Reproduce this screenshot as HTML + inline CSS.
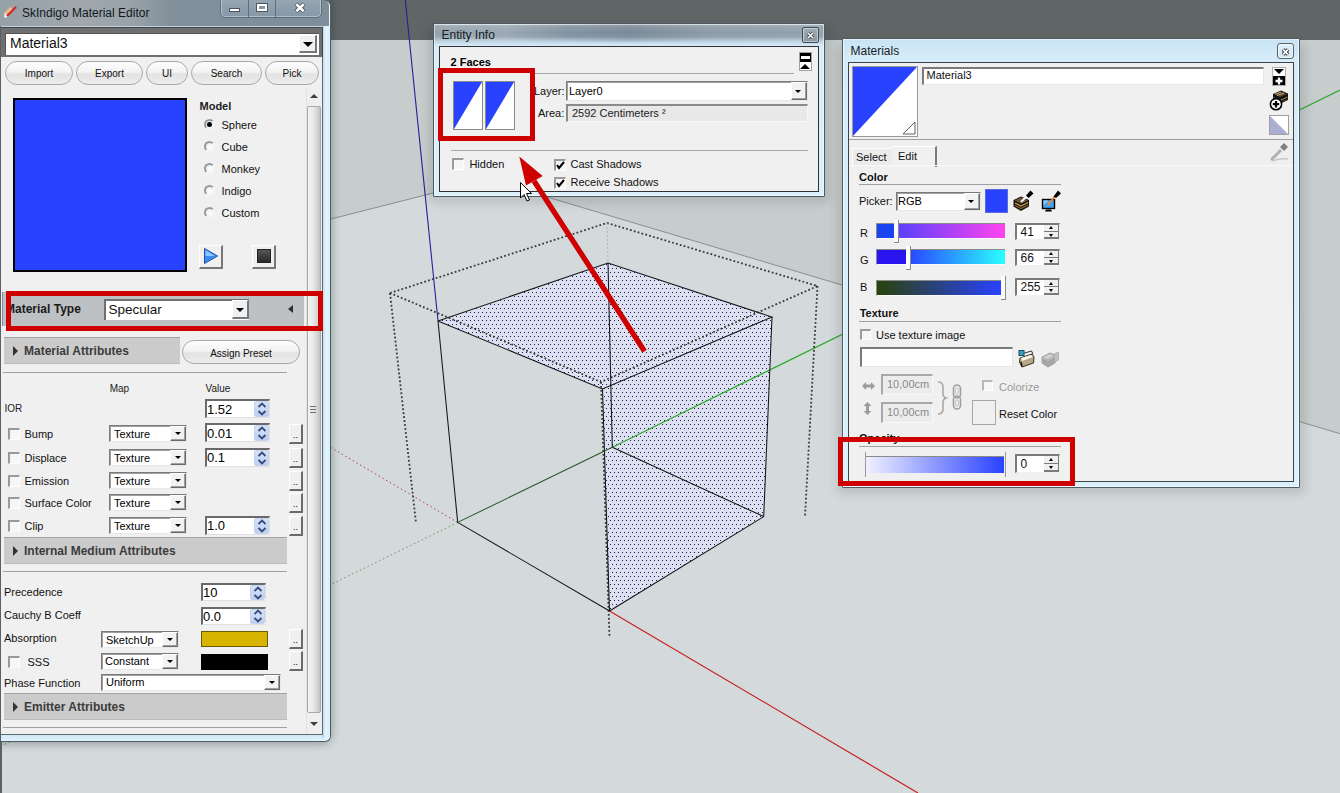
<!DOCTYPE html>
<html><head><meta charset="utf-8"><style>
*{box-sizing:border-box}
html,body{margin:0;padding:0}
body{width:1340px;height:793px;position:relative;overflow:hidden;background:#d4dadb;font-family:"Liberation Sans",sans-serif;font-size:11px;color:#000}
.a{position:absolute}
.t{position:absolute;white-space:nowrap;line-height:1}
svg{position:absolute;left:0;top:0}
</style></head><body>
<svg width="1340" height="793" viewBox="0 0 1340 793">
  <defs>
    <pattern id="stip" width="4" height="8" patternUnits="userSpaceOnUse">
      <rect width="4" height="8" fill="#dde0f0"/>
      <rect x="0" y="4" width="1" height="1" fill="#1c1c50"/>
      <rect x="2" y="0" width="1" height="1" fill="#1c1c50"/>
    </pattern>
  </defs>
  <rect x="0" y="0" width="1340" height="40" fill="#606566"/>
  <rect x="0" y="40" width="1340" height="753" fill="#d4dadb"/>
  <polygon points="329,40 1340,40 1340,433.7 487.5,179.2 329,219.5" fill="#c7cdcd"/>
  <polyline points="329,219.5 487.5,179.2 1340,433.7" fill="none" stroke="#8a9090" stroke-width="1"/>
  <line x1="457.7" y1="522.4" x2="0" y2="746.6" stroke="#50a050" stroke-width="1" stroke-dasharray="1.5,2.8"/>
  <line x1="457.7" y1="522.4" x2="329" y2="446.5" stroke="#b04040" stroke-width="1" stroke-dasharray="1.5,2.8"/>
  <polygon points="438,321 608,263 772,317 602.5,389" fill="url(#stip)"/>
  <polygon points="602.5,389 772,317 763.7,516.6 609.5,611" fill="url(#stip)"/>
  <line x1="405.3" y1="0" x2="438" y2="321" stroke="#22229c" stroke-width="1.1"/>
  <line x1="612.3" y1="447.2" x2="1340" y2="90" stroke="#30a830" stroke-width="1.2"/>
  <line x1="609.5" y1="610.9" x2="918" y2="793" stroke="#c82020" stroke-width="1.2"/>
  <g stroke="#383838" stroke-width="1.8" stroke-dasharray="1.8,2.2" fill="none">
    <polyline points="390,293 607,223 817.5,286 601,382 390,293"/>
    <line x1="390" y1="293" x2="416" y2="523"/>
    <line x1="601" y1="382" x2="609.5" y2="638"/>
    <line x1="817.5" y1="286" x2="805" y2="517"/>
  </g>
  <line x1="607" y1="223" x2="608" y2="263" stroke="#b0b4b4" stroke-width="1" stroke-dasharray="2,2"/>
  <g stroke="#141418" stroke-width="1.05" fill="none">
    <polyline points="438,321 608,263 772,317 602.5,389 438,321"/>
    <line x1="438" y1="321" x2="457.7" y2="522.4"/>
    <line x1="608" y1="263" x2="612.3" y2="447.2"/>
    <line x1="772" y1="317" x2="763.7" y2="516.6"/>
    <line x1="602.5" y1="389" x2="609.5" y2="611"/>
    <line x1="457.7" y1="522.4" x2="609.5" y2="611"/>
    <line x1="609.5" y1="611" x2="763.7" y2="516.6"/>
    <line x1="612.3" y1="447.2" x2="763.7" y2="516.6"/>
  </g>
  <line x1="457.7" y1="522.4" x2="612.3" y2="447.2" stroke="#2a5a2a" stroke-width="1.05"/>
</svg>
<div class="a" style="left:-10px;top:-10px;width:340px;height:751px;box-shadow:1px 2px 8px 1px rgba(20,30,35,.32);border-radius:8px"></div>
<div class="a" style="left:0px;top:741px;width:1.5px;height:52px;background:#5a6268"></div>
<div class="a" style="left:0px;top:0px;width:331px;height:742px;background:#d6eff9;border:1px solid #4f5c64;border-left:none;border-radius:0 6px 6px 0;box-shadow:inset -1px -1px 0 rgba(255,255,255,.6)"></div>
<div class="a" style="left:0px;top:0px;width:329px;height:27px;background:linear-gradient(90deg,#96a0a7 0%,#a0a8ad 25%,#98a2a9 40%,#82909b 52%,#7e8e9a 100%);border-radius:0 6px 0 0"></div>
<div class="a" style="left:0px;top:26px;width:323px;height:1px;background:#c7d3dc"></div>
<div class="a" style="left:322px;top:26px;width:7.5px;height:712px;background:linear-gradient(90deg,#b8d0de,#e0f4fc 45%,#d8f0fa)"></div>
<div class="a" style="left:0px;top:734px;width:322px;height:7px;background:linear-gradient(#cfe8f5,#def3fb)"></div>
<svg style="left:2px;top:4px" width="16" height="16"><path d="M3,13 L2,9 L8,3 L12,6 L6,12 Z" fill="#e8b890"/><path d="M3,9 L6,12 L4,14 L2,13 Z" fill="#f4f4f4"/><line x1="5" y1="12" x2="14" y2="3" stroke="#d02020" stroke-width="2"/></svg>
<div class="t" style="left:22px;top:6.85px;font-size:12px;font-weight:normal;color:#101820;">SkIndigo Material Editor</div>
<div class="a" style="left:220px;top:-2px;width:102px;height:20px;background:linear-gradient(#96a6b2,#8698a6);border:1px solid #5f6f7c;border-radius:0 0 5px 5px;box-shadow:inset 0 0 0 1px rgba(255,255,255,.35)"></div>
<div class="a" style="left:248px;top:0px;width:1px;height:17px;background:#5f6f7c"></div>
<div class="a" style="left:275px;top:0px;width:1px;height:17px;background:#5f6f7c"></div>
<div class="a" style="left:229px;top:8px;width:11px;height:4px;background:#fff;border:1px solid #4a5560"></div>
<div class="a" style="left:256px;top:3px;width:12px;height:9px;background:#fff;border:1px solid #4a5560"></div>
<div class="a" style="left:259px;top:6px;width:6px;height:3px;background:#8a98a4"></div>
<svg style="left:293px;top:1px" width="14" height="13"><path d="M3,3 L11,10.5 M11,3 L3,10.5" stroke="#3e4a54" stroke-width="4.2"/><path d="M3.3,3.3 L10.7,10.2 M10.7,3.3 L3.3,10.2" stroke="#fff" stroke-width="2.6"/></svg>
<div class="a" style="left:1px;top:27px;width:322px;height:30px;background:#6f6f6f;border-top:1px solid #3e464c;border-right:1px solid #3e464c"></div>
<div class="a" style="left:1px;top:57px;width:322px;height:678px;background:#f0f0f0;border-right:1px solid #5e6a72;border-bottom:1px solid #5e6a72"></div>
<div class="a" style="left:0px;top:26px;width:1px;height:715px;background:#56626a"></div>
<div class="a" style="left:5px;top:33px;width:314px;height:22px;background:#fff;border-top:1px solid #555;border-left:1px solid #555"></div>
<div class="t" style="left:10px;top:36.16px;font-size:14px;font-weight:normal;color:#111;">Material3</div>
<div class="a" style="left:299px;top:35px;width:18px;height:18px;background:#f0f0f0;border-top:1px solid #fff;border-left:1px solid #fff;border-right:2px solid #777;border-bottom:2px solid #777"></div>
<div class="a" style="left:303px;top:42px;width:0;height:0;border-left:5px solid transparent;border-right:5px solid transparent;border-top:5px solid #000"></div>
<div class="a" style="left:5px;top:61px;width:68px;height:24px;border:1px solid #a9a9a9;border-radius:12.0px;background:linear-gradient(#fdfdfd,#f3f3f3 45%,#e3e3e3 55%,#ececec)"></div>
<div class="t" style="left:5px;width:68px;text-align:center;top:69.04px;font-size:10px;color:#111">Import</div>
<div class="a" style="left:76px;top:61px;width:67px;height:24px;border:1px solid #a9a9a9;border-radius:12.0px;background:linear-gradient(#fdfdfd,#f3f3f3 45%,#e3e3e3 55%,#ececec)"></div>
<div class="t" style="left:76px;width:67px;text-align:center;top:69.04px;font-size:10px;color:#111">Export</div>
<div class="a" style="left:146px;top:61px;width:42px;height:24px;border:1px solid #a9a9a9;border-radius:12.0px;background:linear-gradient(#fdfdfd,#f3f3f3 45%,#e3e3e3 55%,#ececec)"></div>
<div class="t" style="left:146px;width:42px;text-align:center;top:69.04px;font-size:10px;color:#111">UI</div>
<div class="a" style="left:191px;top:61px;width:71px;height:24px;border:1px solid #a9a9a9;border-radius:12.0px;background:linear-gradient(#fdfdfd,#f3f3f3 45%,#e3e3e3 55%,#ececec)"></div>
<div class="t" style="left:191px;width:71px;text-align:center;top:69.04px;font-size:10px;color:#111">Search</div>
<div class="a" style="left:265px;top:61px;width:54px;height:24px;border:1px solid #a9a9a9;border-radius:12.0px;background:linear-gradient(#fdfdfd,#f3f3f3 45%,#e3e3e3 55%,#ececec)"></div>
<div class="t" style="left:265px;width:54px;text-align:center;top:69.04px;font-size:10px;color:#111">Pick</div>
<div class="a" style="left:305.5px;top:88px;width:16.5px;height:646px;background:#efefef;border-left:1px solid #e2e2e2"></div>
<div class="a" style="left:310px;top:94px;width:0;height:0;border-left:4px solid transparent;border-right:4px solid transparent;border-bottom:4px solid #404040"></div>
<div class="a" style="left:306.5px;top:106px;width:14px;height:607px;background:linear-gradient(90deg,#f4f4f4,#e8e8e8 45%,#cfcfcf 85%,#c0c0c0);border:1px solid #a8a8a8;border-radius:2px"></div>
<div class="a" style="left:310px;top:722px;width:0;height:0;border-left:4px solid transparent;border-right:4px solid transparent;border-top:4px solid #404040"></div>
<div class="a" style="left:310px;top:406px;width:6px;height:1px;background:#707070"></div>
<div class="a" style="left:310px;top:409px;width:6px;height:1px;background:#707070"></div>
<div class="a" style="left:310px;top:412px;width:6px;height:1px;background:#707070"></div>
<div class="a" style="left:13px;top:98px;width:174px;height:174px;background:#2942ff;border:2px solid #000"></div>
<div class="t" style="left:199.5px;top:100.69px;font-size:11px;font-weight:bold;color:#222;">Model</div>
<div class="a" style="left:203.5px;top:119.2px;width:11px;height:11px;border-radius:50%;background:radial-gradient(circle at 60% 60%,#fff,#f4f4f4 55%,#e0e0e0);border:2px solid #9a9a9a;border-right-color:#f4f4f4;border-bottom-color:#f4f4f4"></div>
<div class="a" style="left:206.5px;top:122.2px;width:5px;height:5px;border-radius:50%;background:#000"></div>
<div class="t" style="left:221.5px;top:119.69px;font-size:11px;font-weight:normal;color:#111;">Sphere</div>
<div class="a" style="left:203.5px;top:141.2px;width:11px;height:11px;border-radius:50%;background:radial-gradient(circle at 60% 60%,#fff,#f4f4f4 55%,#e0e0e0);border:2px solid #9a9a9a;border-right-color:#f4f4f4;border-bottom-color:#f4f4f4"></div>
<div class="t" style="left:221.5px;top:141.69px;font-size:11px;font-weight:normal;color:#111;">Cube</div>
<div class="a" style="left:203.5px;top:163.2px;width:11px;height:11px;border-radius:50%;background:radial-gradient(circle at 60% 60%,#fff,#f4f4f4 55%,#e0e0e0);border:2px solid #9a9a9a;border-right-color:#f4f4f4;border-bottom-color:#f4f4f4"></div>
<div class="t" style="left:221.5px;top:163.69px;font-size:11px;font-weight:normal;color:#111;">Monkey</div>
<div class="a" style="left:203.5px;top:185.2px;width:11px;height:11px;border-radius:50%;background:radial-gradient(circle at 60% 60%,#fff,#f4f4f4 55%,#e0e0e0);border:2px solid #9a9a9a;border-right-color:#f4f4f4;border-bottom-color:#f4f4f4"></div>
<div class="t" style="left:221.5px;top:185.69px;font-size:11px;font-weight:normal;color:#111;">Indigo</div>
<div class="a" style="left:203.5px;top:207.2px;width:11px;height:11px;border-radius:50%;background:radial-gradient(circle at 60% 60%,#fff,#f4f4f4 55%,#e0e0e0);border:2px solid #9a9a9a;border-right-color:#f4f4f4;border-bottom-color:#f4f4f4"></div>
<div class="t" style="left:221.5px;top:207.69px;font-size:11px;font-weight:normal;color:#111;">Custom</div>
<div class="a" style="left:199px;top:245px;width:24px;height:24px;background:#f0f0f0;border-top:1px solid #fff;border-left:1px solid #fff;border-right:2px solid #777;border-bottom:2px solid #777"></div>
<svg style="left:203px;top:247px" width="16" height="18"><path d="M1.5,1.5 L14.5,9 L1.5,16.5 Z" fill="#3b8ef0" stroke="#1d4fa8" stroke-width="1"/><path d="M2.5,3 L12,9 L2.5,9 Z" fill="#8cc4ff"/></svg>
<div class="a" style="left:252px;top:245px;width:24px;height:24px;background:#f0f0f0;border-top:1px solid #fff;border-left:1px solid #fff;border-right:2px solid #777;border-bottom:2px solid #777"></div>
<div class="a" style="left:257px;top:249px;width:14px;height:14px;background:linear-gradient(#555,#2a2a2a);border:1px solid #222"></div>
<div class="a" style="left:2px;top:292px;width:302px;height:34px;background:#bdc1c4"></div>
<div class="t" style="left:5px;top:302.85px;font-size:12px;font-weight:bold;color:#1a1a1a;">Material Type</div>
<div class="a" style="left:2px;top:292px;width:5px;height:34px;background:#bdc1c4;border-left:1px solid #8a8e92"></div>
<div class="a" style="left:104px;top:299px;width:145px;height:21px;background:#fff;border-top:2px solid #707070;border-left:2px solid #707070"></div>
<div class="t" style="left:108.5px;top:302.58px;font-size:13.5px;font-weight:normal;color:#111;">Specular</div>
<div class="a" style="left:232px;top:300px;width:17px;height:19px;background:#f0f0f0;border-top:1px solid #fff;border-left:1px solid #fff;border-right:2px solid #777;border-bottom:2px solid #777"></div>
<div class="a" style="left:236px;top:308px;width:0;height:0;border-left:4px solid transparent;border-right:4px solid transparent;border-top:4px solid #000"></div>
<div class="a" style="left:288px;top:305px;width:0;height:0;border-top:4.5px solid transparent;border-bottom:4.5px solid transparent;border-right:5px solid #303030"></div>
<div class="a" style="left:4px;top:337px;width:176px;height:27px;background:#cbcbcb;border-top:1px solid #a4a4a4;border-bottom:1px solid #bcbcbc"></div>
<div class="a" style="left:13px;top:345.5px;width:0;height:0;border-top:5px solid transparent;border-bottom:5px solid transparent;border-left:5px solid #333"></div>
<div class="t" style="left:24px;top:344.85px;font-size:12px;font-weight:bold;color:#3c3c3c;">Material Attributes</div>
<div class="a" style="left:182px;top:340px;width:118px;height:24px;border:1px solid #a9a9a9;border-radius:12.0px;background:linear-gradient(#fdfdfd,#f3f3f3 45%,#e3e3e3 55%,#ececec)"></div>
<div class="t" style="left:182px;width:118px;text-align:center;top:348.54px;font-size:10px;color:#111">Assign Preset</div>
<div class="a" style="left:3px;top:372px;width:284px;height:1px;background:#a0a0a0"></div>
<div class="t" style="left:109.7px;top:384.24px;font-size:10px;font-weight:normal;color:#222;">Map</div>
<div class="t" style="left:205.6px;top:384.24px;font-size:10px;font-weight:normal;color:#222;">Value</div>
<div class="t" style="left:4.5px;top:404.34px;font-size:10px;font-weight:normal;color:#222;">IOR</div>
<div class="a" style="left:205px;top:399px;width:65px;height:19px;background:#fff;border-top:2px solid #6a6a6a;border-left:2px solid #6a6a6a;border-right:1px solid #e0e0e0;border-bottom:1px solid #e0e0e0"></div>
<div class="a" style="left:254px;top:401px;width:15px;height:16px;background:linear-gradient(#d6e2fa,#bccff2);border:1px solid #c4d2ee;border-radius:2px"></div>
<svg style="left:256.5px;top:401.0px" width="10" height="16"><polyline points="1.5,6 5,2.5 8.5,6" fill="none" stroke="#3a4a78" stroke-width="1.8"/><polyline points="1.5,10 5,13.5 8.5,10" fill="none" stroke="#3a4a78" stroke-width="1.8"/></svg>
<div class="t" style="left:207px;top:402.60px;font-size:13px;font-weight:normal;color:#000;">1.52</div>
<div class="a" style="left:8px;top:427.5px;width:12px;height:12px;background:#f6f6f6;border-top:2px solid #9a9a9a;border-left:2px solid #9a9a9a;border-right:1px solid #fff;border-bottom:1px solid #fff"></div>
<div class="t" style="left:24.5px;top:429.39px;font-size:11px;font-weight:normal;color:#111;">Bump</div>
<div class="a" style="left:109px;top:424.5px;width:78px;height:17px;background:#fff;border-top:1px solid #7a7a7a;border-left:1px solid #7a7a7a;border-right:1px solid #e8e8e8;border-bottom:1px solid #e8e8e8;box-shadow:inset 1px 1px 0 #a0a0a0"></div>
<div class="a" style="left:170px;top:425.5px;width:16px;height:15px;background:#f2f2f2;border-top:1px solid #fff;border-left:1px solid #fff;border-right:1px solid #6a6a6a;border-bottom:1px solid #6a6a6a;box-shadow:inset -1px -1px 0 #a0a0a0"></div>
<div class="a" style="left:174.5px;top:431.5px;width:0;height:0;border-left:3.5px solid transparent;border-right:3.5px solid transparent;border-top:3.5px solid #000"></div>
<div class="t" style="left:114px;top:428.99px;font-size:11px;font-weight:normal;color:#000;">Texture</div>
<div class="a" style="left:205px;top:423.4px;width:65px;height:19px;background:#fff;border-top:2px solid #6a6a6a;border-left:2px solid #6a6a6a;border-right:1px solid #e0e0e0;border-bottom:1px solid #e0e0e0"></div>
<div class="a" style="left:254px;top:425.4px;width:15px;height:16px;background:linear-gradient(#d6e2fa,#bccff2);border:1px solid #c4d2ee;border-radius:2px"></div>
<svg style="left:256.5px;top:425.4px" width="10" height="16"><polyline points="1.5,6 5,2.5 8.5,6" fill="none" stroke="#3a4a78" stroke-width="1.8"/><polyline points="1.5,10 5,13.5 8.5,10" fill="none" stroke="#3a4a78" stroke-width="1.8"/></svg>
<div class="t" style="left:207px;top:426.80px;font-size:13px;font-weight:normal;color:#000;">0.01</div>
<div class="a" style="left:289px;top:423.5px;width:14px;height:20px;background:#f0f0f0;border-top:1px solid #fff;border-left:1px solid #fff;border-right:2px solid #6a6a6a;border-bottom:2px solid #6a6a6a"></div>
<div class="t" style="left:293px;top:430.89px;font-size:9px;font-weight:normal;color:#000;">..</div>
<div class="a" style="left:8px;top:451.5px;width:12px;height:12px;background:#f6f6f6;border-top:2px solid #9a9a9a;border-left:2px solid #9a9a9a;border-right:1px solid #fff;border-bottom:1px solid #fff"></div>
<div class="t" style="left:24.5px;top:453.39px;font-size:11px;font-weight:normal;color:#111;">Displace</div>
<div class="a" style="left:109px;top:448.5px;width:78px;height:17px;background:#fff;border-top:1px solid #7a7a7a;border-left:1px solid #7a7a7a;border-right:1px solid #e8e8e8;border-bottom:1px solid #e8e8e8;box-shadow:inset 1px 1px 0 #a0a0a0"></div>
<div class="a" style="left:170px;top:449.5px;width:16px;height:15px;background:#f2f2f2;border-top:1px solid #fff;border-left:1px solid #fff;border-right:1px solid #6a6a6a;border-bottom:1px solid #6a6a6a;box-shadow:inset -1px -1px 0 #a0a0a0"></div>
<div class="a" style="left:174.5px;top:455.5px;width:0;height:0;border-left:3.5px solid transparent;border-right:3.5px solid transparent;border-top:3.5px solid #000"></div>
<div class="t" style="left:114px;top:452.99px;font-size:11px;font-weight:normal;color:#000;">Texture</div>
<div class="a" style="left:205px;top:447.5px;width:65px;height:19px;background:#fff;border-top:2px solid #6a6a6a;border-left:2px solid #6a6a6a;border-right:1px solid #e0e0e0;border-bottom:1px solid #e0e0e0"></div>
<div class="a" style="left:254px;top:449.5px;width:15px;height:16px;background:linear-gradient(#d6e2fa,#bccff2);border:1px solid #c4d2ee;border-radius:2px"></div>
<svg style="left:256.5px;top:449.5px" width="10" height="16"><polyline points="1.5,6 5,2.5 8.5,6" fill="none" stroke="#3a4a78" stroke-width="1.8"/><polyline points="1.5,10 5,13.5 8.5,10" fill="none" stroke="#3a4a78" stroke-width="1.8"/></svg>
<div class="t" style="left:207px;top:450.90px;font-size:13px;font-weight:normal;color:#000;">0.1</div>
<div class="a" style="left:289px;top:447.5px;width:14px;height:20px;background:#f0f0f0;border-top:1px solid #fff;border-left:1px solid #fff;border-right:2px solid #6a6a6a;border-bottom:2px solid #6a6a6a"></div>
<div class="t" style="left:293px;top:454.89px;font-size:9px;font-weight:normal;color:#000;">..</div>
<div class="a" style="left:8px;top:474.5px;width:12px;height:12px;background:#f6f6f6;border-top:2px solid #9a9a9a;border-left:2px solid #9a9a9a;border-right:1px solid #fff;border-bottom:1px solid #fff"></div>
<div class="t" style="left:24.5px;top:476.39px;font-size:11px;font-weight:normal;color:#111;">Emission</div>
<div class="a" style="left:109px;top:471.5px;width:78px;height:17px;background:#fff;border-top:1px solid #7a7a7a;border-left:1px solid #7a7a7a;border-right:1px solid #e8e8e8;border-bottom:1px solid #e8e8e8;box-shadow:inset 1px 1px 0 #a0a0a0"></div>
<div class="a" style="left:170px;top:472.5px;width:16px;height:15px;background:#f2f2f2;border-top:1px solid #fff;border-left:1px solid #fff;border-right:1px solid #6a6a6a;border-bottom:1px solid #6a6a6a;box-shadow:inset -1px -1px 0 #a0a0a0"></div>
<div class="a" style="left:174.5px;top:478.5px;width:0;height:0;border-left:3.5px solid transparent;border-right:3.5px solid transparent;border-top:3.5px solid #000"></div>
<div class="t" style="left:114px;top:475.99px;font-size:11px;font-weight:normal;color:#000;">Texture</div>
<div class="a" style="left:289px;top:470.5px;width:14px;height:20px;background:#f0f0f0;border-top:1px solid #fff;border-left:1px solid #fff;border-right:2px solid #6a6a6a;border-bottom:2px solid #6a6a6a"></div>
<div class="t" style="left:293px;top:477.89px;font-size:9px;font-weight:normal;color:#000;">..</div>
<div class="a" style="left:8px;top:496.5px;width:12px;height:12px;background:#f6f6f6;border-top:2px solid #9a9a9a;border-left:2px solid #9a9a9a;border-right:1px solid #fff;border-bottom:1px solid #fff"></div>
<div class="t" style="left:24.5px;top:498.39px;font-size:11px;font-weight:normal;color:#111;">Surface Color</div>
<div class="a" style="left:109px;top:493.5px;width:78px;height:17px;background:#fff;border-top:1px solid #7a7a7a;border-left:1px solid #7a7a7a;border-right:1px solid #e8e8e8;border-bottom:1px solid #e8e8e8;box-shadow:inset 1px 1px 0 #a0a0a0"></div>
<div class="a" style="left:170px;top:494.5px;width:16px;height:15px;background:#f2f2f2;border-top:1px solid #fff;border-left:1px solid #fff;border-right:1px solid #6a6a6a;border-bottom:1px solid #6a6a6a;box-shadow:inset -1px -1px 0 #a0a0a0"></div>
<div class="a" style="left:174.5px;top:500.5px;width:0;height:0;border-left:3.5px solid transparent;border-right:3.5px solid transparent;border-top:3.5px solid #000"></div>
<div class="t" style="left:114px;top:497.99px;font-size:11px;font-weight:normal;color:#000;">Texture</div>
<div class="a" style="left:289px;top:492.5px;width:14px;height:20px;background:#f0f0f0;border-top:1px solid #fff;border-left:1px solid #fff;border-right:2px solid #6a6a6a;border-bottom:2px solid #6a6a6a"></div>
<div class="t" style="left:293px;top:499.89px;font-size:9px;font-weight:normal;color:#000;">..</div>
<div class="a" style="left:8px;top:519.5px;width:12px;height:12px;background:#f6f6f6;border-top:2px solid #9a9a9a;border-left:2px solid #9a9a9a;border-right:1px solid #fff;border-bottom:1px solid #fff"></div>
<div class="t" style="left:24.5px;top:521.39px;font-size:11px;font-weight:normal;color:#111;">Clip</div>
<div class="a" style="left:109px;top:516.5px;width:78px;height:17px;background:#fff;border-top:1px solid #7a7a7a;border-left:1px solid #7a7a7a;border-right:1px solid #e8e8e8;border-bottom:1px solid #e8e8e8;box-shadow:inset 1px 1px 0 #a0a0a0"></div>
<div class="a" style="left:170px;top:517.5px;width:16px;height:15px;background:#f2f2f2;border-top:1px solid #fff;border-left:1px solid #fff;border-right:1px solid #6a6a6a;border-bottom:1px solid #6a6a6a;box-shadow:inset -1px -1px 0 #a0a0a0"></div>
<div class="a" style="left:174.5px;top:523.5px;width:0;height:0;border-left:3.5px solid transparent;border-right:3.5px solid transparent;border-top:3.5px solid #000"></div>
<div class="t" style="left:114px;top:520.99px;font-size:11px;font-weight:normal;color:#000;">Texture</div>
<div class="a" style="left:205px;top:515.5px;width:65px;height:19px;background:#fff;border-top:2px solid #6a6a6a;border-left:2px solid #6a6a6a;border-right:1px solid #e0e0e0;border-bottom:1px solid #e0e0e0"></div>
<div class="a" style="left:254px;top:517.5px;width:15px;height:16px;background:linear-gradient(#d6e2fa,#bccff2);border:1px solid #c4d2ee;border-radius:2px"></div>
<svg style="left:256.5px;top:517.5px" width="10" height="16"><polyline points="1.5,6 5,2.5 8.5,6" fill="none" stroke="#3a4a78" stroke-width="1.8"/><polyline points="1.5,10 5,13.5 8.5,10" fill="none" stroke="#3a4a78" stroke-width="1.8"/></svg>
<div class="t" style="left:207px;top:518.90px;font-size:13px;font-weight:normal;color:#000;">1.0</div>
<div class="a" style="left:289px;top:515.5px;width:14px;height:20px;background:#f0f0f0;border-top:1px solid #fff;border-left:1px solid #fff;border-right:2px solid #6a6a6a;border-bottom:2px solid #6a6a6a"></div>
<div class="t" style="left:293px;top:522.89px;font-size:9px;font-weight:normal;color:#000;">..</div>
<div class="a" style="left:4px;top:537px;width:283px;height:27px;background:#cbcbcb;border-top:1px solid #a4a4a4;border-bottom:1px solid #bcbcbc"></div>
<div class="a" style="left:13px;top:545.5px;width:0;height:0;border-top:5px solid transparent;border-bottom:5px solid transparent;border-left:5px solid #333"></div>
<div class="t" style="left:24px;top:545.35px;font-size:12px;font-weight:bold;color:#3c3c3c;">Internal Medium Attributes</div>
<div class="a" style="left:3px;top:571px;width:284px;height:1px;background:#a0a0a0"></div>
<div class="t" style="left:4px;top:586.69px;font-size:11px;font-weight:normal;color:#111;">Precedence</div>
<div class="a" style="left:201px;top:583px;width:65px;height:18px;background:#fff;border-top:2px solid #6a6a6a;border-left:2px solid #6a6a6a;border-right:1px solid #e0e0e0;border-bottom:1px solid #e0e0e0"></div>
<div class="a" style="left:250px;top:585px;width:15px;height:15px;background:linear-gradient(#d6e2fa,#bccff2);border:1px solid #c4d2ee;border-radius:2px"></div>
<svg style="left:252.5px;top:584.5px" width="10" height="16"><polyline points="1.5,6 5,2.5 8.5,6" fill="none" stroke="#3a4a78" stroke-width="1.8"/><polyline points="1.5,10 5,13.5 8.5,10" fill="none" stroke="#3a4a78" stroke-width="1.8"/></svg>
<div class="t" style="left:203px;top:586.00px;font-size:13px;font-weight:normal;color:#000;">10</div>
<div class="t" style="left:4px;top:610.49px;font-size:11px;font-weight:normal;color:#111;">Cauchy B Coeff</div>
<div class="a" style="left:201px;top:606.5px;width:65px;height:18px;background:#fff;border-top:2px solid #6a6a6a;border-left:2px solid #6a6a6a;border-right:1px solid #e0e0e0;border-bottom:1px solid #e0e0e0"></div>
<div class="a" style="left:250px;top:608.5px;width:15px;height:15px;background:linear-gradient(#d6e2fa,#bccff2);border:1px solid #c4d2ee;border-radius:2px"></div>
<svg style="left:252.5px;top:608.0px" width="10" height="16"><polyline points="1.5,6 5,2.5 8.5,6" fill="none" stroke="#3a4a78" stroke-width="1.8"/><polyline points="1.5,10 5,13.5 8.5,10" fill="none" stroke="#3a4a78" stroke-width="1.8"/></svg>
<div class="t" style="left:203px;top:609.50px;font-size:13px;font-weight:normal;color:#000;">0.0</div>
<div class="t" style="left:4px;top:633.39px;font-size:11px;font-weight:normal;color:#111;">Absorption</div>
<div class="a" style="left:101px;top:631px;width:78px;height:17px;background:#fff;border-top:1px solid #7a7a7a;border-left:1px solid #7a7a7a;border-right:1px solid #e8e8e8;border-bottom:1px solid #e8e8e8;box-shadow:inset 1px 1px 0 #a0a0a0"></div>
<div class="a" style="left:162px;top:632px;width:16px;height:15px;background:#f2f2f2;border-top:1px solid #fff;border-left:1px solid #fff;border-right:1px solid #6a6a6a;border-bottom:1px solid #6a6a6a;box-shadow:inset -1px -1px 0 #a0a0a0"></div>
<div class="a" style="left:166.5px;top:638.0px;width:0;height:0;border-left:3.5px solid transparent;border-right:3.5px solid transparent;border-top:3.5px solid #000"></div>
<div class="t" style="left:106px;top:635.49px;font-size:11px;font-weight:normal;color:#000;">SketchUp</div>
<div class="a" style="left:201px;top:631px;width:67px;height:16px;background:#d7b400;border:1px solid #6a5a00"></div>
<div class="a" style="left:289px;top:629px;width:14px;height:20px;background:#f0f0f0;border-top:1px solid #fff;border-left:1px solid #fff;border-right:2px solid #6a6a6a;border-bottom:2px solid #6a6a6a"></div>
<div class="t" style="left:293px;top:636.39px;font-size:9px;font-weight:normal;color:#000;">..</div>
<div class="a" style="left:8px;top:656px;width:12px;height:12px;background:#f6f6f6;border-top:2px solid #9a9a9a;border-left:2px solid #9a9a9a;border-right:1px solid #fff;border-bottom:1px solid #fff"></div>
<div class="t" style="left:27.5px;top:657.29px;font-size:11px;font-weight:normal;color:#111;">SSS</div>
<div class="a" style="left:101px;top:652.5px;width:78px;height:17px;background:#fff;border-top:1px solid #7a7a7a;border-left:1px solid #7a7a7a;border-right:1px solid #e8e8e8;border-bottom:1px solid #e8e8e8;box-shadow:inset 1px 1px 0 #a0a0a0"></div>
<div class="a" style="left:162px;top:653.5px;width:16px;height:15px;background:#f2f2f2;border-top:1px solid #fff;border-left:1px solid #fff;border-right:1px solid #6a6a6a;border-bottom:1px solid #6a6a6a;box-shadow:inset -1px -1px 0 #a0a0a0"></div>
<div class="a" style="left:166.5px;top:659.5px;width:0;height:0;border-left:3.5px solid transparent;border-right:3.5px solid transparent;border-top:3.5px solid #000"></div>
<div class="t" style="left:105px;top:656.49px;font-size:11px;font-weight:normal;color:#000;">Constant</div>
<div class="a" style="left:201px;top:653.5px;width:67px;height:16px;background:#000"></div>
<div class="a" style="left:289px;top:651px;width:14px;height:20px;background:#f0f0f0;border-top:1px solid #fff;border-left:1px solid #fff;border-right:2px solid #6a6a6a;border-bottom:2px solid #6a6a6a"></div>
<div class="t" style="left:293px;top:658.39px;font-size:9px;font-weight:normal;color:#000;">..</div>
<div class="t" style="left:4px;top:677.69px;font-size:11px;font-weight:normal;color:#111;">Phase Function</div>
<div class="a" style="left:101px;top:673.5px;width:180px;height:17px;background:#fff;border-top:1px solid #7a7a7a;border-left:1px solid #7a7a7a;border-right:1px solid #e8e8e8;border-bottom:1px solid #e8e8e8;box-shadow:inset 1px 1px 0 #a0a0a0"></div>
<div class="a" style="left:264px;top:674.5px;width:16px;height:15px;background:#f2f2f2;border-top:1px solid #fff;border-left:1px solid #fff;border-right:1px solid #6a6a6a;border-bottom:1px solid #6a6a6a;box-shadow:inset -1px -1px 0 #a0a0a0"></div>
<div class="a" style="left:268.5px;top:680.5px;width:0;height:0;border-left:3.5px solid transparent;border-right:3.5px solid transparent;border-top:3.5px solid #000"></div>
<div class="t" style="left:106px;top:677.49px;font-size:11px;font-weight:normal;color:#000;">Uniform</div>
<div class="a" style="left:4px;top:693px;width:283px;height:27px;background:#cbcbcb;border-top:1px solid #a4a4a4;border-bottom:1px solid #bcbcbc"></div>
<div class="a" style="left:13px;top:701.5px;width:0;height:0;border-top:5px solid transparent;border-bottom:5px solid transparent;border-left:5px solid #333"></div>
<div class="t" style="left:24px;top:701.35px;font-size:12px;font-weight:bold;color:#3c3c3c;">Emitter Attributes</div>
<div class="a" style="left:3px;top:727px;width:284px;height:1px;background:#a0a0a0"></div>
<div class="a" style="left:427px;top:26px;width:404px;height:178px;background:rgba(0,0,0,0.10);border-radius:8px;filter:blur(4px)"></div>
<div class="a" style="left:433px;top:22.5px;width:392px;height:174.5px;background:linear-gradient(#b4c0c8 0px,#8f9ea9 2px,#8292a0 9px,#8a9ba8 13px,#a9bfcd 16px,#c8deec 19px,#d8ecf7 22px,#dbf0f9 100%);border:1px solid #4a5862;border-radius:1px;box-shadow:inset 0 0 0 1px rgba(255,255,255,.5)"></div>
<div class="a" style="left:434px;top:23.5px;width:390px;height:18px;background:linear-gradient(90deg,rgba(255,255,255,.14) 0%,rgba(255,255,255,.2) 18%,rgba(255,255,255,0) 34%,rgba(0,10,30,.06) 50%,rgba(255,255,255,.08) 70%,rgba(255,255,255,.14) 100%)"></div>
<div class="t" style="left:441.5px;top:28.65px;font-size:12px;font-weight:normal;color:#141c24;">Entity Info</div>
<div class="a" style="left:802.4px;top:27.4px;width:16.3px;height:16px;background:linear-gradient(#9eacb6,#8898a4);border:1px solid #3e4a54;border-radius:2px;box-shadow:inset 0 0 0 1px rgba(255,255,255,.45)"></div>
<svg style="left:805px;top:30px" width="11" height="11"><path d="M3,3 L8,8 M8,3 L3,8" stroke="#333" stroke-width="3"/><path d="M3,3 L8,8 M8,3 L3,8" stroke="#fff" stroke-width="1.6"/></svg>
<div class="a" style="left:439px;top:46px;width:380px;height:146px;background:#f0f0f0;border:1px solid #2c3238"></div>
<div class="t" style="left:450.5px;top:56.69px;font-size:11px;font-weight:bold;color:#000;">2 Faces</div>
<div class="a" style="left:798.5px;top:52px;width:13px;height:18.5px;background:#fff;border:1px solid #a0a0a0"></div>
<div class="a" style="left:799.5px;top:53px;width:11px;height:8.5px;background:#000"></div>
<div class="a" style="left:801px;top:55.5px;width:8.5px;height:3px;background:#fff"></div>
<div class="a" style="left:800px;top:63.5px;width:0;height:0;border-left:5px solid transparent;border-right:5px solid transparent;border-bottom:5px solid #000"></div>
<div class="a" style="left:535px;top:73px;width:259px;height:1px;background:#a8a8a8"></div>
<svg style="left:452.5px;top:81px" width="30" height="49"><rect x="0.5" y="0.5" width="29" height="48" fill="#fff" stroke="#8a8a8a"/><polygon points="1,1 29,1 1,48" fill="#2942ff"/></svg>
<svg style="left:484.8px;top:81px" width="30" height="49"><rect x="0.5" y="0.5" width="29" height="48" fill="#fff" stroke="#8a8a8a"/><polygon points="1,1 29,1 1,48" fill="#2942ff"/></svg>
<div class="t" style="left:534px;top:85.89px;font-size:11px;font-weight:normal;color:#111;">Layer:</div>
<div class="a" style="left:566px;top:81px;width:241.5px;height:20px;background:#fff;border-top:1px solid #7a7a7a;border-left:1px solid #7a7a7a;border-right:1px solid #e8e8e8;border-bottom:1px solid #e8e8e8;box-shadow:inset 1px 1px 0 #a0a0a0"></div>
<div class="a" style="left:790.5px;top:82px;width:16px;height:18px;background:#f2f2f2;border-top:1px solid #fff;border-left:1px solid #fff;border-right:1px solid #6a6a6a;border-bottom:1px solid #6a6a6a;box-shadow:inset -1px -1px 0 #a0a0a0"></div>
<div class="a" style="left:795.0px;top:89.5px;width:0;height:0;border-left:3.5px solid transparent;border-right:3.5px solid transparent;border-top:3.5px solid #000"></div>
<div class="t" style="left:569px;top:86.19px;font-size:11px;font-weight:normal;color:#000;">Layer0</div>
<div class="t" style="left:538px;top:108.19px;font-size:11px;font-weight:normal;color:#111;">Area:</div>
<div class="a" style="left:566px;top:103.5px;width:241.5px;height:18.5px;background:#e8e8e8;border-top:2px solid #8a8a8a;border-left:2px solid #8a8a8a;border-right:1px solid #f8f8f8;border-bottom:1px solid #f8f8f8"></div>
<div class="t" style="left:572px;top:107.69px;font-size:11px;font-weight:normal;color:#222;">2592 Centimeters ²</div>
<div class="a" style="left:451px;top:150px;width:357px;height:1px;background:#a8a8a8"></div>
<div class="a" style="left:452px;top:158.2px;width:12px;height:12px;background:#f6f6f6;border-top:2px solid #9a9a9a;border-left:2px solid #9a9a9a;border-right:1px solid #fff;border-bottom:1px solid #fff"></div>
<div class="t" style="left:469.4px;top:159.39px;font-size:11px;font-weight:normal;color:#111;">Hidden</div>
<div class="a" style="left:553.5px;top:158.5px;width:12px;height:12px;background:#f6f6f6;border-top:2px solid #9a9a9a;border-left:2px solid #9a9a9a;border-right:1px solid #fff;border-bottom:1px solid #fff"></div>
<svg style="left:553.5px;top:158.5px" width="12" height="12"><polyline points="3,6 5,9 10,3" fill="none" stroke="#000" stroke-width="2"/></svg>
<div class="t" style="left:570.5px;top:159.39px;font-size:11px;font-weight:normal;color:#111;">Cast Shadows</div>
<div class="a" style="left:553.5px;top:176.5px;width:12px;height:12px;background:#f6f6f6;border-top:2px solid #9a9a9a;border-left:2px solid #9a9a9a;border-right:1px solid #fff;border-bottom:1px solid #fff"></div>
<svg style="left:553.5px;top:176.5px" width="12" height="12"><polyline points="3,6 5,9 10,3" fill="none" stroke="#000" stroke-width="2"/></svg>
<div class="t" style="left:570.5px;top:177.19px;font-size:11px;font-weight:normal;color:#111;">Receive Shadows</div>
<div class="a" style="left:836px;top:43px;width:470px;height:452px;background:rgba(0,0,0,0.10);border-radius:8px;filter:blur(4px)"></div>
<div class="a" style="left:842px;top:38.3px;width:458px;height:449.7px;background:linear-gradient(#c9e3f4 0px,#d6ecf8 20px,#dbf0f9 100%);border:1px solid #4d5c66;border-radius:1px;box-shadow:inset 0 0 0 1px rgba(255,255,255,.55)"></div>
<div class="t" style="left:850.5px;top:44.65px;font-size:12px;font-weight:normal;color:#141c24;">Materials</div>
<div class="a" style="left:1277.2px;top:43.1px;width:16.6px;height:16.4px;background:linear-gradient(#e2f0fa,#d2e6f2);border:1px solid #56646e;border-radius:3px;box-shadow:inset 0 0 0 1px rgba(255,255,255,.6)"></div>
<svg style="left:1280px;top:46px" width="11" height="11"><path d="M3,3.5 L8,8.5 M8,3.5 L3,8.5" stroke="#2a3038" stroke-width="3.6"/><path d="M3.2,3.7 L7.8,8.3 M7.8,3.7 L3.2,8.3" stroke="#fff" stroke-width="1.8"/></svg>
<div class="a" style="left:848px;top:62px;width:446px;height:420px;background:#f0f0f0;border:1px solid #3a444c"></div>
<svg style="left:852px;top:66px" width="66" height="71"><rect x="0.5" y="0.5" width="65" height="70" fill="#fff" stroke="#9a9a9a"/><polygon points="1,1 65,1 1,70" fill="#2942ff"/><polyline points="51,68 63,68 63,56 51,68" fill="none" stroke="#606060" stroke-width="1"/></svg>
<div class="a" style="left:921.5px;top:66.5px;width:342px;height:18px;background:#fff;border-top:2px solid #7a7a7a;border-left:2px solid #7a7a7a;border-right:1px solid #e6e6e6;border-bottom:1px solid #e6e6e6"></div>
<div class="t" style="left:926.5px;top:70.19px;font-size:11px;font-weight:normal;color:#111;">Material3</div>
<div class="a" style="left:1272px;top:66.5px;width:14px;height:19px;background:#fff;border:1px solid #b0b0b0"></div>
<div class="a" style="left:1274px;top:69px;width:0;height:0;border-left:5px solid transparent;border-right:5px solid transparent;border-top:5px solid #000"></div>
<div class="a" style="left:1273px;top:75.5px;width:12px;height:9.5px;background:#000"></div>
<svg style="left:1273px;top:75.5px" width="12" height="10"><path d="M6,1.5 L6,8.5 M2.5,5 L9.5,5" stroke="#fff" stroke-width="2.4"/></svg>
<svg style="left:1268px;top:89px" width="22" height="22">
<path d="M5,5 L13,1.5 L20,4.5 L20,11 L12,15 L5,11 Z" fill="#141210"/>
<path d="M6,5 L13,2.5 L19,5 L12,8 Z" fill="#5a4c38"/>
<path d="M7,5.2 L13,3.2 M9,6.5 L16,4" stroke="#c8a870" stroke-width="0.9"/>
<path d="M5.5,8.5 L12,11.5 L19.5,8" stroke="#a88a58" stroke-width="1" fill="none"/>
<path d="M5.5,11 L12,14 L19.5,10.5" stroke="#6a5838" stroke-width="0.8" fill="none"/>
<circle cx="8" cy="15.2" r="5.6" fill="#fff" stroke="#000" stroke-width="1.6"/>
<path d="M8,12 L8,18.4 M4.8,15.2 L11.2,15.2" stroke="#000" stroke-width="2.2"/></svg>
<svg style="left:1269px;top:115px" width="20" height="20"><rect x="0.5" y="0.5" width="19" height="19" fill="#fff" stroke="#a0a0a0"/><polygon points="1,1 19,19 1,19" fill="#a9aed2"/></svg>
<div class="a" style="left:849px;top:139px;width:444px;height:1px;background:#a0a0a0"></div>
<div class="a" style="left:849px;top:140px;width:444px;height:26px;background:#efefef"></div>
<svg style="left:1268px;top:141px" width="22" height="22"><path d="M3,19 L13,9" stroke="#b0b0b0" stroke-width="3"/><path d="M12,6 L16,2 L20,6 L16,10 Z" fill="#808080"/><path d="M4,20 Q12,17 20,18" stroke="#c8c8c8" stroke-width="1.5" fill="none"/></svg>
<div class="a" style="left:852px;top:148px;width:40px;height:18px;background:#ebebeb;border-top:1px solid #fff;border-left:1px solid #fff"></div>
<div class="t" style="left:856px;top:152.19px;font-size:11px;font-weight:normal;color:#111;">Select</div>
<div class="a" style="left:892px;top:146px;width:45px;height:21px;background:#f0f0f0;border-top:1px solid #fff;border-right:2px solid #7a7a7a"></div>
<div class="t" style="left:898px;top:150.69px;font-size:11px;font-weight:normal;color:#111;">Edit</div>
<div class="a" style="left:849px;top:165px;width:444px;height:1px;background:#fafafa"></div>
<div class="t" style="left:859px;top:171.89px;font-size:11px;font-weight:bold;color:#111;">Color</div>
<div class="a" style="left:859px;top:184px;width:202px;height:1px;background:#a0a0a0"></div>
<div class="t" style="left:859px;top:195.69px;font-size:11px;font-weight:normal;color:#111;">Picker:</div>
<div class="a" style="left:895.5px;top:191.5px;width:85px;height:19px;background:#fff;border-top:1px solid #7a7a7a;border-left:1px solid #7a7a7a;border-right:1px solid #e8e8e8;border-bottom:1px solid #e8e8e8;box-shadow:inset 1px 1px 0 #a0a0a0"></div>
<div class="a" style="left:963.5px;top:192.5px;width:16px;height:17px;background:#f2f2f2;border-top:1px solid #fff;border-left:1px solid #fff;border-right:1px solid #6a6a6a;border-bottom:1px solid #6a6a6a;box-shadow:inset -1px -1px 0 #a0a0a0"></div>
<div class="a" style="left:968.0px;top:199.5px;width:0;height:0;border-left:3.5px solid transparent;border-right:3.5px solid transparent;border-top:3.5px solid #000"></div>
<div class="t" style="left:898px;top:196.19px;font-size:11px;font-weight:normal;color:#000;">RGB</div>
<div class="a" style="left:984.5px;top:188.5px;width:23px;height:24.5px;background:#2942ff;border:1px solid #5a6ad8"></div>
<svg style="left:1012px;top:189px" width="22" height="24">
<path d="M1.5,11 L9,7.5 L17,11 L17,17.5 L9,22 L1.5,17.5 Z" fill="#1a1610"/>
<path d="M2.5,11.5 L9,8.5 L16,11.5 L9,14.5 Z" fill="#6a5530"/>
<path d="M3,14 L9,17 L16,13.5" stroke="#d09a50" stroke-width="1.2" fill="none"/>
<path d="M3,16.5 L9,19.5 L16,16" stroke="#a07840" stroke-width="1" fill="none"/>
<path d="M9,13 L16,6" stroke="#f4f4f4" stroke-width="2.2"/>
<path d="M14,6.5 L18.5,1.5 L21.5,4.5 L16.5,9 Z" fill="#000"/></svg>
<svg style="left:1041px;top:189px" width="20" height="24">
<rect x="1.5" y="10.5" width="12" height="9" fill="#48a0e8" stroke="#000" stroke-width="1.4"/>
<path d="M2.5,11.5 L8,11.5 L2.5,16 Z" fill="#8cc8f4"/>
<path d="M5,20.5 L10,20.5 L11,22.5 L4,22.5 Z" fill="#000"/>
<path d="M7,16 L14,7" stroke="#e88a40" stroke-width="2"/>
<path d="M12.5,7.5 L17,1.5 L20,4.5 L15,9 Z" fill="#000"/></svg>
<div class="t" style="left:860px;top:228.19px;font-size:11px;font-weight:normal;color:#111;">R</div>
<div class="a" style="left:875.5px;top:223.2px;width:129px;height:16px;background:linear-gradient(90deg,#3a40ff,#ff44f0);border-top:1px solid #8a8a8a;border-left:1px solid #8a8a8a;border-bottom:1px solid #fafafa"></div>
<div class="a" style="left:876.5px;top:224.2px;width:17.5px;height:14px;background:#1a44f0"></div>
<div class="a" style="left:894px;top:220.2px;width:4.5px;height:23px;background:#fbfbfb;border-right:1px solid #8a8a8a;border-bottom:1px solid #8a8a8a"></div>
<div class="a" style="left:1014.5px;top:222.7px;width:45.5px;height:17.5px;background:#fff;border-top:2px solid #7a7a7a;border-left:2px solid #7a7a7a;border-right:1px solid #f0f0f0;border-bottom:1px solid #f0f0f0"></div>
<div class="a" style="left:1044.0px;top:224.7px;width:15px;height:7.25px;background:#f0f0f0;border-right:1px solid #7a7a7a;border-bottom:1px solid #7a7a7a"></div>
<div class="a" style="left:1044.0px;top:231.95px;width:15px;height:7.25px;background:#f0f0f0;border-right:1px solid #7a7a7a;border-bottom:2px solid #7a7a7a"></div>
<div class="a" style="left:1049.0px;top:226.3px;width:0;height:0;border-left:2.5px solid transparent;border-right:2.5px solid transparent;border-bottom:3px solid #000"></div>
<div class="a" style="left:1049.0px;top:234.1px;width:0;height:0;border-left:2.5px solid transparent;border-right:2.5px solid transparent;border-top:3px solid #000"></div>
<div class="t" style="left:1020.5px;top:225.80px;font-size:12px;font-weight:normal;color:#111;">41</div>
<div class="t" style="left:860px;top:254.69px;font-size:11px;font-weight:normal;color:#111;">G</div>
<div class="a" style="left:875.5px;top:249.2px;width:129px;height:16px;background:linear-gradient(90deg,#2900ff 0%,#2944ff 24%,#2a90ff 55%,#29ffff 100%);border-top:1px solid #8a8a8a;border-left:1px solid #8a8a8a;border-bottom:1px solid #fafafa"></div>
<div class="a" style="left:876.5px;top:250.2px;width:29.5px;height:14px;background:#2a14f0"></div>
<div class="a" style="left:906px;top:245.7px;width:4.5px;height:24.5px;background:#fbfbfb;border-right:1px solid #8a8a8a;border-bottom:1px solid #8a8a8a"></div>
<div class="a" style="left:1014.5px;top:248.7px;width:45.5px;height:17.5px;background:#fff;border-top:2px solid #7a7a7a;border-left:2px solid #7a7a7a;border-right:1px solid #f0f0f0;border-bottom:1px solid #f0f0f0"></div>
<div class="a" style="left:1044.0px;top:250.7px;width:15px;height:7.25px;background:#f0f0f0;border-right:1px solid #7a7a7a;border-bottom:1px solid #7a7a7a"></div>
<div class="a" style="left:1044.0px;top:257.95px;width:15px;height:7.25px;background:#f0f0f0;border-right:1px solid #7a7a7a;border-bottom:2px solid #7a7a7a"></div>
<div class="a" style="left:1049.0px;top:252.3px;width:0;height:0;border-left:2.5px solid transparent;border-right:2.5px solid transparent;border-bottom:3px solid #000"></div>
<div class="a" style="left:1049.0px;top:260.1px;width:0;height:0;border-left:2.5px solid transparent;border-right:2.5px solid transparent;border-top:3px solid #000"></div>
<div class="t" style="left:1020.5px;top:251.80px;font-size:12px;font-weight:normal;color:#111;">66</div>
<div class="t" style="left:860px;top:281.69px;font-size:11px;font-weight:normal;color:#111;">B</div>
<div class="a" style="left:875.5px;top:279.7px;width:125.5px;height:16px;background:linear-gradient(90deg,#2a4208,#2942ff);border-top:1px solid #8a8a8a;border-left:1px solid #8a8a8a;border-bottom:1px solid #fafafa"></div>
<div class="a" style="left:1001px;top:276px;width:4.5px;height:24px;background:#fbfbfb;border-right:1px solid #8a8a8a;border-bottom:1px solid #8a8a8a"></div>
<div class="a" style="left:1014.5px;top:278px;width:45.5px;height:17.5px;background:#fff;border-top:2px solid #7a7a7a;border-left:2px solid #7a7a7a;border-right:1px solid #f0f0f0;border-bottom:1px solid #f0f0f0"></div>
<div class="a" style="left:1044.0px;top:280px;width:15px;height:7.25px;background:#f0f0f0;border-right:1px solid #7a7a7a;border-bottom:1px solid #7a7a7a"></div>
<div class="a" style="left:1044.0px;top:287.25px;width:15px;height:7.25px;background:#f0f0f0;border-right:1px solid #7a7a7a;border-bottom:2px solid #7a7a7a"></div>
<div class="a" style="left:1049.0px;top:281.6px;width:0;height:0;border-left:2.5px solid transparent;border-right:2.5px solid transparent;border-bottom:3px solid #000"></div>
<div class="a" style="left:1049.0px;top:289.4px;width:0;height:0;border-left:2.5px solid transparent;border-right:2.5px solid transparent;border-top:3px solid #000"></div>
<div class="t" style="left:1020.5px;top:281.10px;font-size:12px;font-weight:normal;color:#111;">255</div>
<div class="t" style="left:859.7px;top:307.69px;font-size:11px;font-weight:bold;color:#111;">Texture</div>
<div class="a" style="left:859px;top:320.5px;width:202px;height:1px;background:#a0a0a0"></div>
<div class="a" style="left:859.7px;top:329px;width:11px;height:11px;background:#f6f6f6;border-top:2px solid #9a9a9a;border-left:2px solid #9a9a9a;border-right:1px solid #fff;border-bottom:1px solid #fff"></div>
<div class="t" style="left:876px;top:329.69px;font-size:11px;font-weight:normal;color:#111;">Use texture image</div>
<div class="a" style="left:859.7px;top:347.4px;width:153.5px;height:19.5px;background:#fff;border-top:2px solid #7a7a7a;border-left:2px solid #7a7a7a;border-right:1px solid #e6e6e6;border-bottom:1px solid #e6e6e6"></div>
<svg style="left:1017px;top:349px" width="20" height="19">
<path d="M3,9 L15,5 L17,8 L16.5,14 L5,18 L2.5,13 Z" fill="#b8a888" stroke="#3a3020" stroke-width="1"/>
<path d="M4,9 L14,6 L16,8 L5,12 Z" fill="#fbf8f0"/>
<path d="M5,17.5 L4,13" stroke="#1a1810" stroke-width="1.5"/>
<path d="M6,4.5 L14.5,2 L16,5" fill="none" stroke="#303030" stroke-width="1"/>
<rect x="2" y="1.5" width="5" height="5" fill="#38a0b8" stroke="#10506a" stroke-width="1"/></svg>
<svg style="left:1040px;top:349px" width="20" height="19">
<path d="M2,8 L10,4 L15,6 L15,14 L8,18 L2,14 Z" fill="#b4b4b4" stroke="#a0a0a0" stroke-width="1"/>
<path d="M3,8.5 L10,5 L14,7 L8,10 Z" fill="#d0d0d0"/>
<path d="M3,11 L8,13.5 L14.5,10 M3,13.5 L8,16 L14.5,12.5" stroke="#8e8e8e" stroke-width="0.9" fill="none"/>
<path d="M14,5 L18.5,3 L18.5,11 L14.5,13 Z" fill="#c0c0c0" stroke="#a8a8a8" stroke-width="0.8"/></svg>
<svg style="left:860px;top:378px" width="18" height="40"><path d="M2,8 L6,4 L6,6.5 L11,6.5 L11,4 L15,8 L11,12 L11,9.5 L6,9.5 L6,12 Z" fill="#9c9c9c"/><path d="M7.5,24 L11.5,28 L9,28 L9,33 L11.5,33 L7.5,37 L3.5,33 L6,33 L6,28 L3.5,28 Z" fill="#9c9c9c"/></svg>
<div class="a" style="left:880.6px;top:374.2px;width:52.2px;height:21px;background:#ececec;border-top:2px solid #a8a8a8;border-left:2px solid #a8a8a8;border-right:1px solid #f8f8f8;border-bottom:1px solid #f8f8f8"></div>
<div class="t" style="left:887px;top:378.89px;font-size:11px;font-weight:normal;color:#8a8a8a;">10,00cm</div>
<div class="a" style="left:880.6px;top:402.4px;width:52.2px;height:21px;background:#ececec;border-top:2px solid #a8a8a8;border-left:2px solid #a8a8a8;border-right:1px solid #f8f8f8;border-bottom:1px solid #f8f8f8"></div>
<div class="t" style="left:887px;top:407.09px;font-size:11px;font-weight:normal;color:#8a8a8a;">10,00cm</div>
<svg style="left:934px;top:377px" width="30" height="42"><path d="M4,5 Q9,5 9,10 L9,16 Q9,20 12,21 Q9,22 9,26 L9,32 Q9,37 4,37" fill="none" stroke="#a8a8a8" stroke-width="1.6"/><rect x="19.5" y="8" width="7" height="13" rx="3.5" fill="none" stroke="#a0a0a0" stroke-width="1.6"/><rect x="21.5" y="11" width="3" height="6" rx="1.5" fill="none" stroke="#c0c0c0" stroke-width="1"/><rect x="19.5" y="19" width="7" height="13" rx="3.5" fill="none" stroke="#a0a0a0" stroke-width="1.6"/><rect x="21.5" y="23" width="3" height="6" rx="1.5" fill="none" stroke="#c0c0c0" stroke-width="1"/></svg>
<div class="a" style="left:982px;top:380px;width:11px;height:11px;background:#f6f6f6;border-top:2px solid #b8b8b8;border-left:2px solid #b8b8b8;border-right:1px solid #fff;border-bottom:1px solid #fff"></div>
<div class="t" style="left:999px;top:381.69px;font-size:11px;font-weight:normal;color:#9a9a9a;">Colorize</div>
<div class="a" style="left:972px;top:399.5px;width:23.5px;height:25px;background:#f0f0f0;border:1px solid #a8a8a8"></div>
<div class="t" style="left:999px;top:408.69px;font-size:11px;font-weight:normal;color:#111;">Reset Color</div>
<div class="t" style="left:859px;top:433.19px;font-size:11px;font-weight:bold;color:#111;">Opacity</div>
<div class="a" style="left:859px;top:446px;width:202px;height:1px;background:#a0a0a0"></div>
<div class="a" style="left:864.7px;top:452px;width:1px;height:25px;background:#9a9a9a"></div>
<div class="a" style="left:866px;top:456.3px;width:138px;height:16.5px;background:linear-gradient(90deg,#f0f0ff,#2942ff);border-top:1px solid #8a8a8a"></div>
<div class="a" style="left:1005px;top:452px;width:1px;height:25px;background:#9a9a9a"></div>
<div class="a" style="left:1014.5px;top:454.3px;width:45.5px;height:18.5px;background:#fff;border-top:2px solid #7a7a7a;border-left:2px solid #7a7a7a;border-right:1px solid #f0f0f0;border-bottom:1px solid #f0f0f0"></div>
<div class="a" style="left:1044.0px;top:456.3px;width:15px;height:7.75px;background:#f0f0f0;border-right:1px solid #7a7a7a;border-bottom:1px solid #7a7a7a"></div>
<div class="a" style="left:1044.0px;top:464.05px;width:15px;height:7.75px;background:#f0f0f0;border-right:1px solid #7a7a7a;border-bottom:2px solid #7a7a7a"></div>
<div class="a" style="left:1049.0px;top:458.2px;width:0;height:0;border-left:2.5px solid transparent;border-right:2.5px solid transparent;border-bottom:3px solid #000"></div>
<div class="a" style="left:1049.0px;top:466.4px;width:0;height:0;border-left:2.5px solid transparent;border-right:2.5px solid transparent;border-top:3px solid #000"></div>
<div class="t" style="left:1020.5px;top:457.90px;font-size:12px;font-weight:normal;color:#111;">0</div>
<div class="a" style="left:6px;top:291px;width:316.5px;height:39.5px;border:5px solid #cf0000"></div>
<div class="a" style="left:438.3px;top:68.3px;width:96.69999999999999px;height:73.2px;border:5px solid #cf0000"></div>
<div class="a" style="left:838px;top:437px;width:237px;height:48.60000000000002px;border:5px solid #cf0000"></div>
<svg width="1340" height="793" style="left:0;top:0">
<line x1="534" y1="181" x2="644.5" y2="351.2" stroke="#cf0000" stroke-width="5.3"/>
<polygon points="519.3,156.4 542.7,176 526,185.6" fill="#cf0000"/>
<path d="M520.5,182.5 L520.5,198 L524,194.5 L527,201 L529.5,200 L526.5,193.5 L531.5,193.5 Z" fill="#fff" stroke="#000" stroke-width="1"/>
</svg>
</body></html>
